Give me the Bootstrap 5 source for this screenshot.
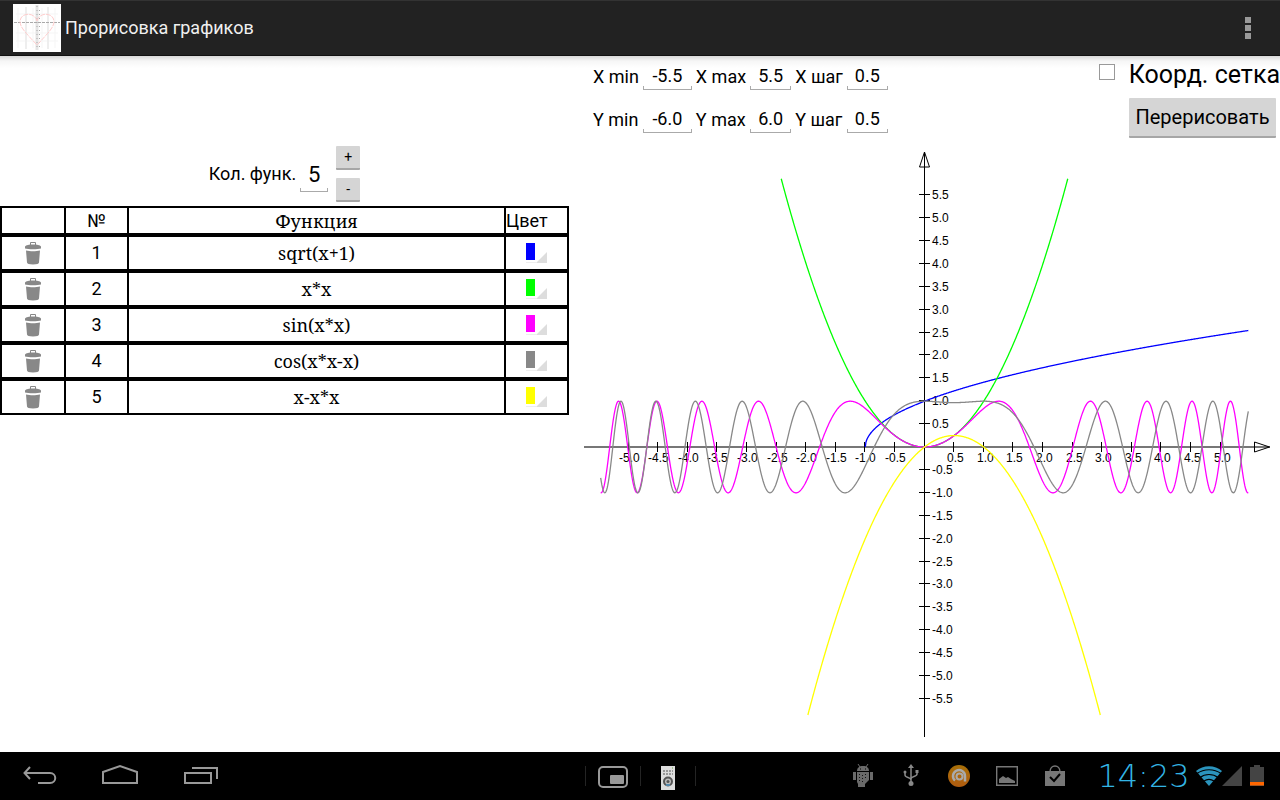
<!DOCTYPE html>
<html lang="ru">
<head>
<meta charset="utf-8">
<meta name="viewport" content="width=device-width, initial-scale=1">
<title>Прорисовка графиков</title>
<link href="https://cdn.jsdelivr.net/npm/bootstrap@5.3.0/dist/css/bootstrap.min.css" rel="stylesheet">
<style>
  body { font-family: Roboto, "Noto Sans", sans-serif; font-size: 18px; line-height: 24px; color: #000; background: #fff; }
  .app-bar { height: 56px; background: #222; border-top: 1px solid #333; border-bottom: 1px solid #111; color: #f0f0f0; padding-left: 13px; }
  .app-title { font-size: 18px; line-height: 24px; }
  .split { display: grid; grid-template-columns: 569fr 711fr; }
  .workspace { background: linear-gradient(#d8d8d8, #f6f6f6 5px, #fff 12px); }
  .bare { background: none; border: 0; padding: 0; }
  .line-input { border: 0; border-radius: 0; padding: 0 0 3px; text-align: center; color: #000; width: 41px; height: 27px; font-size: 18px;
    background: linear-gradient(#aaa, #aaa) left bottom / 100% 1px no-repeat, linear-gradient(#aaa, #aaa) left bottom / 1px 4px no-repeat, linear-gradient(#aaa, #aaa) right bottom / 1px 4px no-repeat; }
  .line-input.wide { width: 49px; }
  .line-input.count { width: 28px; height: 36px; padding: 0; font-size: 22px; }
  .settings { height: 90px; padding: 7px 4px 0 24px; }
  .ranges { display: grid; grid-template-columns: repeat(6, auto); column-gap: 4px; row-gap: 16px; align-items: center; }
  .droid-btn { background: #d5d5d5; border: 0; border-bottom: 2px solid #a6a6a6; border-radius: 1px; color: #000; padding: 0; }
  .droid-btn.step { width: 24px; height: 24px; font-size: 14px; line-height: 20px; }
  .droid-btn.redraw { width: 147px; height: 40px; font-size: 20px; }
  .tick-box { appearance: none; width: 16px; height: 16px; border: 1px solid #999; background: #fff; margin: 1px 14px 0 0; }
  .tick-box:checked { background: #33b5e5; }
  .grid-toggle { margin-right: -4px; margin-bottom: 11px; }
  .grid-label { font-size: 25px; line-height: 24px; }
  .counter { height: 150px; padding-bottom: 4px; }
  .count-field { margin-bottom: 10px; }
  .functions { width: 100%; border-collapse: separate; border-spacing: 0; table-layout: fixed; text-align: center; }
  .functions th, .functions td { border: 2px solid #000; border-left-width: 0; font-weight: 400; height: 36px; padding: 0; vertical-align: middle; background: #fff; }
  .functions th { height: 29px; line-height: 20px; }
  .functions th:first-child, .functions td:first-child { border-left-width: 2px; }
  .functions .formula { font-family: "Noto Serif", "Droid Serif", "Liberation Serif", serif; font-size: 18px; line-height: 20px; }
  .functions svg { display: block; margin: auto; }
  .c-del { width: 66px; } .c-num { width: 63px; } .c-color { width: 63px; }
  .plot { display: block; width: 100%; height: auto; }
  .plot text { font: 12px "Liberation Sans", Arial, sans-serif; }
  .system-bar { height: 48px; background: #000; }
  .system-bar svg { display: block; margin: auto; }
  .nav-key { width: 80px; height: 48px; }
  .slot { width: 55px; border-left: 1px solid #242424; height: 20px; }
  .notice { width: 48px; }
  .clock { font-family: "DejaVu Sans", sans-serif; font-weight: 200; font-size: 32px; line-height: 36px; color: #33b5e5; width: 97px; text-align: center; }
</style>
</head>
<body class="min-vh-100 d-flex flex-column">

<svg class="d-none">
  <symbol id="bin" viewBox="0 0 16 24">
    <path d="M5.500 4V1.500h5V4" fill="none" stroke="#888"/>
    <path d="M0 5.500C1 4 4 3.500 8 3.500S15 4 16 5.500V7.500C13 8.500 3 8.500 0 7.500zM1 9.500c4 1 10 1 14 0l-1 12c0 1-2 2-6 2s-6-1-6-2z" fill="#888"/>
  </symbol>
</svg>

<header class="app-bar d-flex align-items-center">
  <svg width="48" height="48" viewBox="0 0 48 48" aria-hidden="true">
    <path fill="#fff" d="M0 0h48v48H0z"/>
    <path d="M5 4v40M20 4v40M29 4v40M42 4v40M3 10h42M3 29h42M3 37h42" stroke="#f5f5f5"/>
    <path d="M13 3v42M35 3v42" stroke="#eee" stroke-width="2"/>
    <path d="M24 1v45" stroke="#e4e4e4" stroke-width="3"/>
    <path d="M1 18.500h46" stroke="#aaa" stroke-dasharray="3 1"/>
    <path d="M24 2v44M26.500 6v38" stroke="#aaa" stroke-dasharray="1 3"/>
    <path d="M24 17C22 8 8 8 7 17c0 6 4 10 17 24 13-14 17-18 17-24C40 8 26 8 24 17" fill="none" stroke="#fcc" stroke-dasharray="5 1"/>
  </svg>
  <h1 class="app-title fw-normal m-0 ps-1">Прорисовка графиков</h1>
  <button class="bare ms-auto px-4 me-1" type="button" aria-label="Меню">
    <svg class="d-block" width="8" height="24" viewBox="0 0 8 24"><path d="M1 1h6v6H1zM1 9h6v6H1zM1 17h6v6H1z" fill="#999"/></svg>
  </button>
</header>

<main class="workspace split flex-grow-1">
  <section>
    <div class="counter d-flex justify-content-center align-items-end gap-2">
      <div class="count-field d-flex align-items-center gap-1">
        <label for="count">Кол. функ.</label>
        <input class="line-input count" id="count" value="5">
      </div>
      <div class="d-flex flex-column gap-2">
        <button class="droid-btn step" type="button">+</button>
        <button class="droid-btn step" type="button">-</button>
      </div>
    </div>
    <table class="functions">
      <colgroup><col class="c-del"><col class="c-num"><col><col class="c-color"></colgroup>
      <thead><tr><th></th><th>№</th><th class="formula">Функция</th><th class="text-start">Цвет</th></tr></thead>
      <tbody id="rows"></tbody>
    </table>
  </section>

  <section>
    <form class="settings d-flex justify-content-between align-items-start">
      <div class="ranges">
        <label for="xmin">X min</label><input class="line-input wide" id="xmin" value="-5.5">
        <label for="xmax">X max</label><input class="line-input" id="xmax" value="5.5">
        <label for="xstep">X шаг</label><input class="line-input" id="xstep" value="0.5">
        <label for="ymin">Y min</label><input class="line-input wide" id="ymin" value="-6.0">
        <label for="ymax">Y max</label><input class="line-input" id="ymax" value="6.0">
        <label for="ystep">Y шаг</label><input class="line-input" id="ystep" value="0.5">
      </div>
      <div class="d-flex flex-column align-items-end">
        <div class="grid-toggle d-flex align-items-start">
          <input class="tick-box" type="checkbox" id="grid">
          <label class="grid-label text-nowrap" for="grid">Коорд. сетка</label>
        </div>
        <button class="droid-btn redraw" type="button">Перерисовать</button>
      </div>
    </form>
    <svg class="plot" id="plot" viewBox="0 0 711 606" role="img" aria-label="Графики функций"></svg>
  </section>
</main>

<footer class="system-bar split align-items-center">
  <div class="d-flex">
    <button class="bare nav-key" type="button" aria-label="Назад"><svg width="36" height="24" viewBox="0 -1 36 24" fill="none" stroke="#999" stroke-width="2"><path d="M8 2L2.500 8l5.500 6M3 8h25c7 0 7 10 0 10H16"/></svg></button>
    <button class="bare nav-key" type="button" aria-label="Домой"><svg width="36" height="24" viewBox="0 -1 36 24" fill="none" stroke="#999" stroke-width="2"><path d="M1 18V7l17-6 17 6v11z"/></svg></button>
    <button class="bare nav-key" type="button" aria-label="Недавние"><svg width="36" height="24" viewBox="-1 -1 36 24" fill="none" stroke="#999" stroke-width="2"><path d="M2 8h26v10H2zM9 3h25v11"/></svg></button>
  </div>
  <div class="d-flex align-items-center">
    <div class="d-flex ms-3">
      <div class="slot d-flex align-items-center"><svg width="30" height="22" viewBox="0 0 30 22"><rect x="1" y="1" width="28" height="20" rx="4" fill="none" stroke="#999" stroke-width="2"/><rect x="12" y="9" width="14" height="9" rx="1" fill="#999"/></svg></div>
      <div class="slot d-flex align-items-center"><svg width="14" height="24" viewBox="0 0 14 24"><path fill="#ddd" d="M0 0h14v24H0z"/><path d="M2 5h10M2 8h10" stroke="#999" stroke-width="2" stroke-dasharray="2 1"/><path d="M11 2h1" stroke="#6a4"/><circle cx="7" cy="15.500" r="4" fill="#bbb" stroke="#555" stroke-width="2"/><circle cx="7" cy="15.500" r="1.500" fill="#555"/><path d="M5 19h4" stroke="#58a" stroke-width="2"/></svg></div>
      <div class="slot"></div>
    </div>
    <div class="d-flex align-items-center ms-auto">
      <div class="notice"><svg width="22" height="24" viewBox="0 0 22 24" fill="#6a6a6a"><path d="M5 7c0-3 2-5 6-5s6 2 6 5zM1 8h3v8H1zM18 8h3v8h-3zM5 8h12v8l-4 4v3H6v-3l-1-2z"/><path d="M6 0l2 3M16 0l-2 3" stroke="#6a6a6a"/><path d="M7.500 10v9M10.500 11v9M13.500 10v6" stroke="#111" stroke-dasharray="1 2"/><path d="M8 5h1M13 5h1" stroke="#000"/></svg></div>
      <div class="notice"><svg width="16" height="24" viewBox="0 0 16 24" fill="none" stroke="#888" stroke-width="1.500"><path d="M8 3v16M2 8v3c0 3 6 2 6 5M14 8v2c0 3-6 2-6 5"/><path d="M8 0l3 4H5zM12.500 6h3v3h-3z" fill="#888" stroke="none"/><circle cx="2" cy="8" r="1.500" fill="#888" stroke="none"/><circle cx="8" cy="19.500" r="2.500" fill="#888" stroke="none"/></svg></div>
      <div class="notice"><svg width="22" height="22" viewBox="0 0 22 22"><defs><linearGradient id="orb" x2="0" y2="1"><stop stop-color="#a87008"/><stop offset="1" stop-color="#b05c10"/></linearGradient></defs><circle cx="11" cy="11" r="11" fill="url(#orb)"/><path d="M7 15.500A6 6 0 1 1 17 11v5.500" fill="none" stroke="#aaa" stroke-width="2.500"/><circle cx="11.500" cy="11.500" r="3" fill="none" stroke="#aaa" stroke-width="2"/></svg></div>
      <div class="notice"><svg width="22" height="20" viewBox="0 0 22 20"><path d="M.7.700h20.600v18.600H.7z" fill="none" stroke="#777" stroke-width="1.400"/><path d="M3 17v-4l4-3 3 2 2-1 3 2 4 2v2z" fill="#777"/></svg></div>
      <div class="notice"><svg width="20" height="22" viewBox="0 0 20 22"><path d="M5 7c0-8 10-8 10 0" fill="none" stroke="#777" stroke-width="1.500"/><path d="M0 6h20v15H0z" fill="#777"/><path d="M5 12l4 4 6-7" fill="none" stroke="#000" stroke-width="2"/></svg></div>
      <time class="clock ms-3">14:23</time>
      <svg class="ms-1" width="26" height="20" viewBox="0 0 26 20" fill="#2b94bd"><path d="M13 20L0 5C7-1.500 19-1.500 26 5z"/><path d="M1 7.500c7-5 17-5 24 0M4 11.500c5-4 13-4 18 0M8 15c3-2 7-2 10 0" fill="none" stroke="#000" stroke-width="1.200"/></svg>
      <svg width="20" height="20" viewBox="0 0 20 20"><path d="M20 0v20H0z" fill="#444"/></svg>
      <svg class="ms-2 me-3" width="14" height="22" viewBox="0 0 14 22"><path d="M4 0h6v2h4v19H0V2h4z" fill="#444"/><path d="M0 17h14v3.500H0z" fill="#f60"/></svg>
    </div>
  </div>
</footer>

<script src="https://cdn.jsdelivr.net/npm/bootstrap@5.3.0/dist/js/bootstrap.bundle.min.js"></script>
<script>
  const functions = [
    { text: 'sqrt(x+1)',  color: '#0000ff', f: x => Math.sqrt(x + 1) },
    { text: 'x*x',        color: '#00ff00', f: x => x * x },
    { text: 'sin(x*x)',   color: '#ff00ff', f: x => Math.sin(x * x) },
    { text: 'cos(x*x-x)', color: '#888888', f: x => Math.cos(x * x - x) },
    { text: 'x-x*x',      color: '#ffff00', f: x => x - x * x }
  ];

  document.getElementById('rows').innerHTML = functions.map((fn, i) => `<tr>
    <td><button class="bare d-block mx-auto" type="button" aria-label="Удалить"><svg width="16" height="24"><use href="#bin"/></svg></button></td>
    <td>${i + 1}</td><td class="formula">${fn.text}</td>
    <td><button class="bare d-block mx-auto" type="button" aria-label="Цвет" aria-haspopup="listbox"><svg width="21" height="20" viewBox="0 0 21 20"><path d="M0 0h9v17H0z" fill="${fn.color}"/><path d="M21 9v11H10z" fill="#ddd"/><path d="M0 19.500h10" stroke="#eee"/></svg></button></td></tr>`).join('');

  // Origin, units per axis and drawn range
  const ox = 355.5, oy = 301, ux = 59.2, uy = 45.8, xEnd = 547, yEnd = 5.9;
  let out = `<g stroke="#000" fill="none"><path d="M${ox} 6V591M350.500 21l5-15 5 15z"/>
    <path d="M15 ${oy}H701" stroke="#777" stroke-width="2"/><path d="M685.500 296v10l15-5z"/></g>`;
  let ticks = '', labels = '';
  for (let k = -11; k <= 11; k++) {
    if (!k) continue;
    const v = k / 2, y = Math.round(oy - v * uy) - .5, x = Math.round(ox + v * ux) - .5;
    ticks += `M350 ${y}h11`;
    labels += `<text x="363" y="${y + 4.5}">${v.toFixed(1)}</text>`;
    if (Math.abs(k) < 11) {
      ticks += `M${x} 296v10`;
      labels += `<text x="${x - (v < 0 ? 9.5 : 6.5)}" y="316">${v.toFixed(1)}</text>`;
    }
  }
  out += `<path d="${ticks}" stroke="#000"/>${labels}`;
  for (const fn of functions) {
    let d = '', pen = 'M';
    for (let i = -xEnd; i <= xEnd; i++) {
      const x = i / 100, y = fn.f(x);
      if (!(Math.abs(y) <= yEnd)) { pen = 'M'; continue; }
      d += pen + (ox + x * ux).toFixed(2) + ' ' + (oy - y * uy).toFixed(2);
      pen = 'L';
    }
    out += `<path d="${d}" fill="none" stroke="${fn.color}" stroke-width="1.3"/>`;
  }
  document.getElementById('plot').innerHTML = out;
</script>
</body>
</html>
